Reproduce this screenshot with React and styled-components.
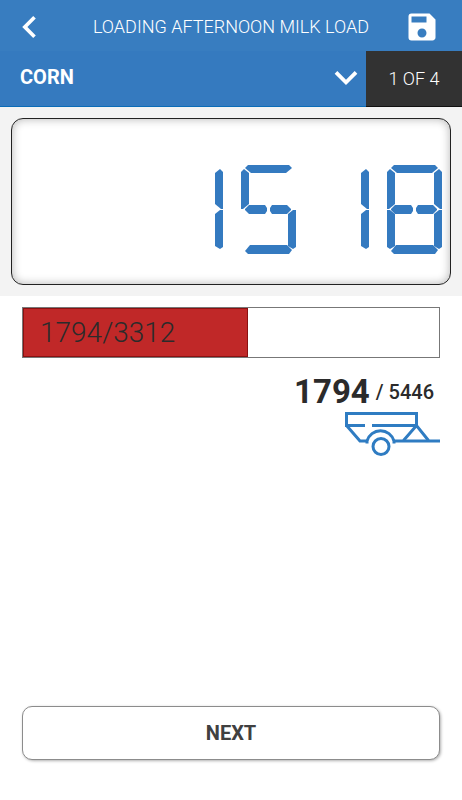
import { useState } from 'react';
import styled, { createGlobalStyle } from 'styled-components';
import { MdSave } from 'react-icons/md';

const ingredients = ['CORN', 'SILAGE', 'HAY', 'MINERALS'];
const loaded = 1794;
const target = 3312;
const trailerTotal = 5446;

// segments lit for each digit of the scale display
const digitSegments = {
  0: ['a', 'b', 'c', 'd', 'e', 'f'],
  1: ['b', 'c'],
  2: ['a', 'b', 'd', 'e', 'g', 'h'],
  3: ['a', 'b', 'c', 'd', 'g', 'h'],
  4: ['b', 'c', 'f', 'g', 'h'],
  5: ['a', 'c', 'd', 'f', 'g', 'h'],
  6: ['a', 'c', 'd', 'e', 'f', 'g', 'h'],
  7: ['a', 'b', 'c'],
  8: ['a', 'b', 'c', 'd', 'e', 'f', 'g', 'h'],
  9: ['a', 'b', 'c', 'd', 'f', 'g', 'h'],
};

const segmentAreas = {
  a: '1 / 2 / 3 / 7',
  b: '2 / 6 / 5 / 8',
  c: '6 / 6 / 9 / 8',
  d: '8 / 2 / 10 / 7',
  e: '6 / 1 / 9 / 3',
  f: '2 / 1 / 5 / 3',
  g: '4 / 2 / 7 / 4',
  h: '4 / 5 / 7 / 7',
};

const segmentShapes = {
  a: '3px 0, 44px 0, 47px 3px, 41px 8px, 6px 8px, 0 3px',
  b: '0 4px, 5px 0, 8px 3px, 8px 40px, 6px 40px, 0 35px',
  c: '0 4px, 5px 0, 8px 0, 8px 37px, 5px 39px, 0 36px',
  d: '5px 0, 42px 0, 47px 5px, 44px 9px, 3px 9px, 0 6px',
  e: '8px 4px, 3px 0, 0 0, 0 37px, 3px 39px, 8px 36px',
  f: '8px 4px, 3px 0, 0 3px, 0 40px, 2px 40px, 8px 35px',
  g: '0 4px, 4px 0, 20px 0, 22px 3px, 22px 6px, 20px 9px, 4px 9px, 0 5px',
  h: '21px 4px, 17px 0, 2px 0, 0 3px, 0 6px, 2px 9px, 17px 9px, 21px 5px',
};

function SegmentDisplay({ value }) {
  return (
    <Display role="img" aria-label={String(value)}>
      {String(value).split('').map((digit, index) => (
        <Digit key={index}>
          {digitSegments[digit].map((name) => <Segment key={name} $name={name} />)}
        </Digit>
      ))}
    </Display>
  );
}

function TrailerIcon() {
  return (
    <Trailer viewBox="0 0 95 44" fill="none" stroke="currentColor" strokeWidth="3" aria-hidden="true">
      <path d="M1.5 12V1.5H71.5V13.5" />
      <path d="M0 13.5H20M27 13.5H72" />
      <path d="M1.5 13.5L15 29H22" />
      <path d="M22 31.5V29A14 14 0 0 1 49 29V31.5" />
      <path d="M49 29H95" />
      <path d="M58.5 28.5L71.5 13.5L83.5 28.5" />
      <circle cx="36" cy="34.5" r="8" />
    </Trailer>
  );
}

export default function App() {
  const [ingredient, setIngredient] = useState(ingredients[0]);
  const position = ingredients.indexOf(ingredient) + 1;

  return (
    <>
      <GlobalStyle />
      <Page>
        <Header>
          <IconButton type="button" aria-label="Back">
            <svg width="14" height="22" viewBox="8 6 7.41 12" fill="currentColor">
              <path d="M15.41 7.41L14 6l-6 6 6 6 1.41-1.41L10.83 12z" />
            </svg>
          </IconButton>
          <Title>LOADING AFTERNOON MILK LOAD</Title>
          <IconButton type="button" aria-label="Save">
            <MdSave size={36} />
          </IconButton>
        </Header>
        <IngredientBar>
          <SelectWrapper>
            <IngredientSelect
              aria-label="Ingredient"
              value={ingredient}
              onChange={(e) => setIngredient(e.target.value)}
            >
              {ingredients.map((name) => <option key={name}>{name}</option>)}
            </IngredientSelect>
            <SelectArrow viewBox="6 8.59 12 7.41" fill="currentColor" aria-hidden="true">
              <path d="M16.59 8.59L12 13.17 7.41 8.59 6 10l6 6 6-6z" />
            </SelectArrow>
          </SelectWrapper>
          <Counter>{`${position} OF ${ingredients.length}`}</Counter>
        </IngredientBar>
        <ScaleSection>
          <SegmentDisplay value={target - loaded} />
        </ScaleSection>
        <Content>
          <ProgressBar
            role="progressbar"
            aria-label="Loaded"
            aria-valuenow={loaded}
            aria-valuemax={target}
          >
            <ProgressFill style={{ width: `${(loaded / target) * 100}%` }}>
              {`${loaded}/${target}`}
            </ProgressFill>
          </ProgressBar>
          <TrailerInfo>
            <TrailerWeight>
              <strong>{loaded}</strong>
              <span>{`/ ${trailerTotal}`}</span>
            </TrailerWeight>
            <TrailerIcon />
          </TrailerInfo>
          <NextButton type="button">NEXT</NextButton>
        </Content>
      </Page>
    </>
  );
}

const GlobalStyle = createGlobalStyle`
  * {
    box-sizing: border-box;
  }
  body {
    margin: 0;
    background-color: #ffffff;
    color: #2b2b2b;
    font-family: Roboto, 'Liberation Sans', sans-serif;
  }
  button, select {
    font-family: inherit;
    cursor: pointer;
  }
`;
const Page = styled.div`
  min-height: 100vh;
  display: flex;
  flex-direction: column;
`;
const Header = styled.header`
  height: 51px;
  padding: 2px 22px 0;
  display: flex;
  justify-content: space-between;
  align-items: center;
  background-color: #387dc0;
  color: #ffffff;
`;
const IconButton = styled.button`
  width: 36px;
  height: 36px;
  padding: 0;
  display: flex;
  align-items: center;
  border: none;
  background: none;
  color: inherit;
`;
const Title = styled.h1`
  margin: 0;
  font-size: 18px;
  font-weight: 300;
  line-height: 24px;
  white-space: nowrap;
`;
const IngredientBar = styled.div`
  height: 56px;
  display: flex;
  background-color: #357abf;
  color: #ffffff;
`;
const SelectWrapper = styled.div`
  flex: 1;
  display: grid;
  align-items: center;
  border-bottom: 1px solid #0a6cb8;
`;
const IngredientSelect = styled.select`
  grid-area: 1 / 1;
  width: 100%;
  height: 100%;
  padding: 0 44px 4px 20px;
  appearance: none;
  border: none;
  background: none;
  color: inherit;
  font-size: 20px;
  font-weight: 700;
  option {
    color: #2b2b2b;
  }
`;
const SelectArrow = styled.svg`
  grid-area: 1 / 1;
  justify-self: end;
  width: 24px;
  height: 14px;
  margin-right: 8px;
  margin-bottom: 2px;
  pointer-events: none;
`;
const Counter = styled.div`
  width: 96px;
  display: flex;
  justify-content: center;
  align-items: center;
  background-color: #323232;
  border-bottom: 1px solid #111111;
  font-size: 18px;
  font-weight: 300;
`;
const ScaleSection = styled.section`
  padding: 11px;
  background-color: #f3f3f3;
`;
const Display = styled.div`
  height: 167px;
  padding: 16px 8px 0;
  display: flex;
  justify-content: flex-end;
  align-items: center;
  gap: 18px;
  border: 1px solid #222222;
  border-radius: 12px;
  background-color: #ffffff;
  box-shadow: inset 0 0 10px #b4b4b4;
`;
const Digit = styled.span`
  display: grid;
  grid-template-columns: 4px 4px 18px 3px 18px 4px 4px;
  grid-template-rows: 4px 4px 32px 4px 1px 4px 31px 4px 5px;
`;
const Segment = styled.span`
  grid-area: ${({ $name }) => segmentAreas[$name]};
  clip-path: polygon(${({ $name }) => segmentShapes[$name]});
  background-color: #347ac0;
`;
const Content = styled.main`
  flex: 1;
  padding: 11px 22px 40px;
  display: flex;
  flex-direction: column;
`;
const ProgressBar = styled.div`
  height: 51px;
  border: 1px solid #777777;
`;
const ProgressFill = styled.div`
  height: 100%;
  padding-left: 16px;
  display: flex;
  align-items: center;
  border: 1px solid #8a1010;
  background-color: #c02828;
  font-size: 28px;
  font-weight: 300;
`;
const TrailerInfo = styled.div`
  margin-top: 14px;
  display: flex;
  flex-direction: column;
  align-items: flex-end;
`;
const TrailerWeight = styled.div`
  padding-right: 6px;
  display: flex;
  align-items: center;
  gap: 6px;
  font-size: 20px;
  font-weight: 500;
  line-height: 40px;
  strong {
    font-size: 33px;
    font-weight: 700;
  }
`;
const Trailer = styled.svg`
  width: 95px;
  height: 44px;
  color: #2f7cc2;
`;
const NextButton = styled.button`
  height: 54px;
  margin-top: auto;
  border: 1px solid #8c8c8c;
  border-radius: 10px;
  background-color: #ffffff;
  box-shadow: 1px 1px 3px #b0b0b0;
  color: #404040;
  font-size: 20px;
  font-weight: 700;
`;
